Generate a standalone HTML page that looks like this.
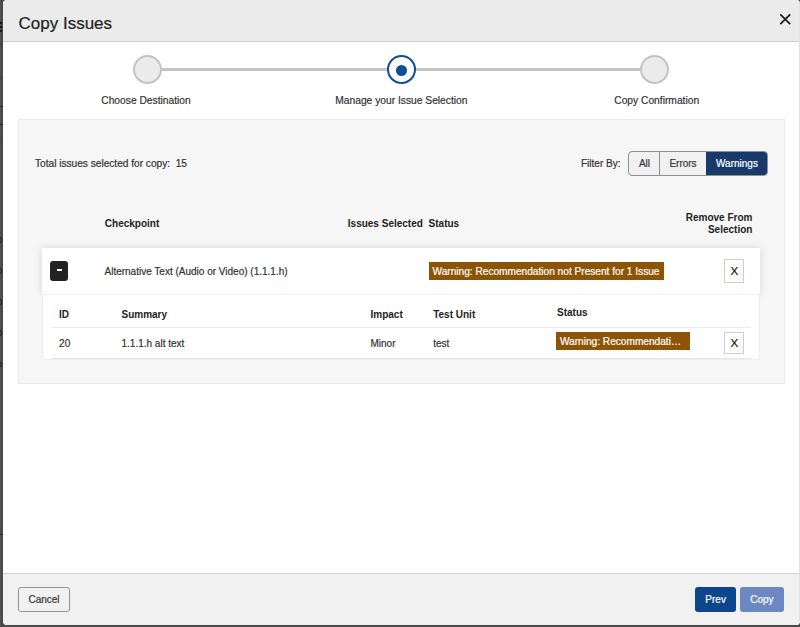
<!DOCTYPE html>
<html><head><meta charset="utf-8">
<style>
*{margin:0;padding:0;box-sizing:border-box}
html,body{width:800px;height:627px;overflow:hidden}
body{background:#4b4b4b;font-family:"Liberation Sans",sans-serif;color:#333;position:relative;-webkit-text-stroke:0.2px currentColor}
.a{position:absolute;white-space:nowrap}
.t10{font-size:10px;line-height:12px}
.b{font-weight:bold;color:#222;-webkit-text-stroke:0}
#modal{position:absolute;left:3px;top:0;width:797px;height:624.5px;background:#fff;border-radius:4px;overflow:hidden;box-shadow:inset -1px 0 0 #e2e2e2}
#hdr{position:absolute;left:0;top:0;width:796px;height:42px;background:#ebebeb;border-bottom:1px solid #cdcdcd}
#ftr{position:absolute;left:0;top:573px;width:796px;height:52px;background:#f1f1f1;border-top:1px solid #d3d3d3}
.circ{position:absolute;width:29px;height:29px;border-radius:50%;border:2px solid #c3c3c3;background:#ebebeb;top:55px}
.line{position:absolute;top:68px;height:3px;background:#c4c4c4}
#panel{position:absolute;left:15px;top:118.6px;width:766.5px;height:265.6px;background:#f6f6f6;border:1px solid #ebebeb}
.card{position:absolute;left:38.75px;top:248px;width:718.5px;height:46px;background:#fff;box-shadow:0 0 8px rgba(0,0,0,0.13)}
.sub{position:absolute;left:39px;top:293.5px;width:718px;height:66px;background:#fff;border:1px solid #ececec;border-top:1px solid #f0f0f0;border-radius:0 0 3px 3px}
.badge{position:absolute;height:18px;background:#8e5405;color:#fff;font-size:10.15px;line-height:19.6px;padding-left:3.5px;white-space:nowrap;overflow:hidden}
.xbox{position:absolute;width:19.5px;border:1px solid #cfcfcf;background:#fff;font-size:11.5px;text-align:center;color:#111}
.btn{position:absolute;top:587px;height:25px;border-radius:3px;font-size:10px;line-height:23px;text-align:center}
</style></head><body>
<div class="a" style="left:0;top:0;width:3px;height:627px;background:linear-gradient(to right,#575757 0,#454545 1.6px,#4d4d4d 3px)"></div>
<div class="a" style="left:0;top:22.4px;width:2.4px;height:1.6px;background:#151515"></div>
<div class="a" style="left:0;top:26.1px;width:2.4px;height:1.6px;background:#151515"></div>
<div class="a" style="left:0;top:30.2px;width:2.4px;height:1.6px;background:#151515"></div>
<div class="a" style="left:0;top:43.5px;width:3px;height:1px;background:#3a3a3a"></div>
<div class="a" style="left:0;top:77px;width:3px;height:1px;background:#424242"></div>
<div class="a" style="left:0;top:105.5px;width:3px;height:1px;background:#2a2a2a"></div>
<div class="a" style="left:0;top:124px;width:3px;height:1px;background:#2a2a2a"></div>
<div class="a" style="left:0;top:140px;width:3px;height:1px;background:#424242"></div>
<div class="a" style="left:0;top:533.5px;width:3px;height:1px;background:#2e2e2e"></div>
<div class="a" style="left:-3px;top:237px;width:5px;height:5.5px;border:1.2px solid #1e1e1e;border-radius:50%"></div>
<div class="a" style="left:-3px;top:268px;width:5px;height:5.5px;border:1.2px solid #1e1e1e;border-radius:50%"></div>
<div class="a" style="left:-3px;top:299px;width:5px;height:5.5px;border:1.2px solid #1e1e1e;border-radius:50%"></div>
<div class="a" style="left:-3px;top:330px;width:5px;height:5.5px;border:1.2px solid #1e1e1e;border-radius:50%"></div>
<div class="a" style="left:-3px;top:361.5px;width:5px;height:5.5px;border:1.2px solid #1e1e1e;border-radius:50%"></div>
<div id="modal">
  <div id="hdr"></div>
  <div class="a" style="left:15.5px;top:14px;font-size:17px;line-height:20px;color:#222">Copy Issues</div>
  <svg class="a" style="left:776px;top:13px" width="12" height="12" viewBox="0 0 12 12"><path d="M1.3 1.3L11.2 11.2M11.2 1.3L1.3 11.2" stroke="#1a1a1a" stroke-width="1.7" fill="none"/></svg>

  <div class="line" style="left:159px;width:478px"></div>
  <div class="circ" style="left:130.1px"></div>
  <div class="circ" style="left:383.7px;background:#fff;border-color:#0f4c9c"></div>
  <div class="a" style="left:393.2px;top:64.5px;width:11px;height:11px;border-radius:50%;background:#0f4c9c"></div>
  <div class="circ" style="left:637.2px"></div>
  <div class="a t10" style="left:43px;top:95px;width:200px;text-align:center;color:#333;font-size:10.25px">Choose Destination</div>
  <div class="a t10" style="left:298.4px;top:95px;width:200px;text-align:center;color:#333;font-size:10.25px">Manage your Issue Selection</div>
  <div class="a t10" style="left:553.7px;top:95px;width:200px;text-align:center;color:#333;font-size:10.25px">Copy Confirmation</div>

  <div id="panel"></div>
  <div class="a t10" style="left:32px;top:158px;font-size:10.13px">Total issues selected for copy:&nbsp; 15</div>
  <div class="a t10" style="left:578px;top:157.5px">Filter By:</div>
  <div class="a" style="left:625px;top:151px;width:140.3px;height:24.6px;border:1px solid #8f8f8f;border-radius:4px;background:#f1f1f1;overflow:hidden">
    <div class="a" style="left:30px;top:0;width:1px;height:24px;background:#8f8f8f"></div>
    <div class="a" style="left:76.7px;top:0;width:62.6px;height:24px;background:#173a6b"></div>
    <div class="a t10" style="left:0;top:5.7px;width:31px;text-align:center">All</div>
    <div class="a t10" style="left:31px;top:5.7px;width:46px;text-align:center">Errors</div>
    <div class="a t10" style="left:76.7px;top:5.7px;width:62.6px;text-align:center;color:#fff">Warnings</div>
  </div>

  <div class="a t10 b" style="left:101.8px;top:218px">Checkpoint</div>
  <div class="a t10 b" style="left:344.8px;top:218px">Issues Selected</div>
  <div class="a t10 b" style="left:425.6px;top:218px">Status</div>
  <div class="a b" style="left:649.4px;top:211.5px;width:100px;text-align:right;font-size:10px;line-height:12.8px">Remove From<br>Selection</div>

  <div class="card"></div>
  <div class="sub"></div>
  <div class="a" style="left:47.3px;top:261px;width:17.6px;height:19.6px;background:#222;border-radius:3px"></div>
  <div class="a" style="left:53.8px;top:269.2px;width:4.8px;height:2px;background:#f4f4f4"></div>
  <div class="a t10" style="left:101.5px;top:266px">Alternative Text (Audio or Video) (1.1.1.h)</div>
  <div class="badge" style="left:426px;top:261.8px;width:234.5px">Warning: Recommendation not Present for 1 Issue</div>
  <div class="xbox" style="left:721px;top:259px;height:23.6px;line-height:23.4px;padding-left:1px">X</div>

  <div class="a t10 b" style="left:56.1px;top:308.6px">ID</div>
  <div class="a t10 b" style="left:118.5px;top:308.6px">Summary</div>
  <div class="a t10 b" style="left:367.5px;top:308.6px">Impact</div>
  <div class="a t10 b" style="left:430.2px;top:308.6px">Test Unit</div>
  <div class="a t10 b" style="left:554px;top:307px">Status</div>
  <div class="a" style="left:48px;top:326.5px;width:700px;height:1px;background:#ececec"></div>
  <div class="a t10" style="left:56.1px;top:337.8px">20</div>
  <div class="a t10" style="left:118.5px;top:337.8px">1.1.1.h alt text</div>
  <div class="a t10" style="left:367.5px;top:337.8px">Minor</div>
  <div class="a t10" style="left:430.2px;top:337.8px">test</div>
  <div class="badge" style="left:553.4px;top:332.4px;width:133.2px">Warning: Recommendati…</div>
  <div class="xbox" style="left:721.2px;top:331.8px;height:22px;line-height:21.2px;padding-left:1px">X</div>
  <div class="a" style="left:48px;top:358px;width:700px;height:1px;background:#e6e6e6"></div>

  <div id="ftr"></div>
  <div class="btn" style="left:15px;width:52px;border:1px solid #959595;background:#f1f1f1;color:#333">Cancel</div>
  <div class="btn" style="left:692.25px;width:40.75px;background:#0d468c;color:#fff;line-height:25px">Prev</div>
  <div class="btn" style="left:736.6px;width:44.5px;background:#6c87c2;color:#fff;line-height:25px">Copy</div>
</div>
</body></html>
